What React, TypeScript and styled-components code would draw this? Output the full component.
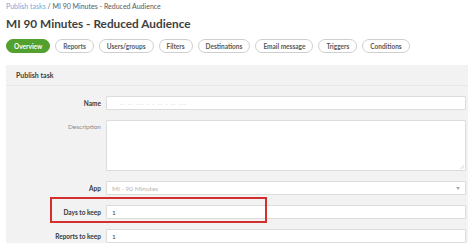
import React from "react";
import styled, { createGlobalStyle } from "styled-components";

const GlobalStyle = createGlobalStyle`
  html, body {
    margin: 0;
    padding: 0;
    background: #ffffff;
    font-family: Lato, "Open Sans", "Liberation Sans", sans-serif;
    color: #404040;
  }
`;

const tabs = [
  "Overview",
  "Reports",
  "Users/groups",
  "Filters",
  "Destinations",
  "Email message",
  "Triggers",
  "Conditions",
];

const Page = styled.div`
  width: 474px;
  height: 243px;
  overflow: hidden;
  padding: 0 6px;
  box-sizing: border-box;
`;

const Crumbs = styled.div`
  padding-top: 2px;
  height: 12px;
  font-size: 7px;
  line-height: 8px;
  color: #595959;
  span {
    color: #6fa8dc;
  }
`;

const Title = styled.h1`
  margin: 0;
  height: 25px;
  font-size: 11.8px;
  line-height: 20px;
  font-weight: 700;
  color: #404040;
`;

const TabRow = styled.div`
  display: flex;
  gap: 5px;
  height: 14px;
`;

const Tab = styled.div<{ active?: boolean }>`
  flex-shrink: 0;
  white-space: nowrap;
  display: flex;
  align-items: center;
  padding: 0 7px;
  height: 14px;
  box-sizing: border-box;
  border-radius: 8px;
  font-size: 6.5px;
  font-weight: 700;
  border: 1px solid ${(p) => (p.active ? "#52a02e" : "#cfcfcf")};
  background: ${(p) => (p.active ? "#52a02e" : "#ffffff")};
  color: ${(p) => (p.active ? "#ffffff" : "#595959")};
`;

const Panel = styled.div`
  margin-top: 12px;
  width: 462px;
  height: 200px;
  background: #f2f2f2;
`;

const PanelHeader = styled.div`
  height: 20px;
  padding-left: 10px;
  display: flex;
  align-items: center;
  font-size: 7px;
  font-weight: 700;
  color: #404040;
  border-bottom: 1px solid #e8e8e8;
`;

const Form = styled.div`
  padding: 10px 2px 0 0;
  display: flex;
  flex-direction: column;
  gap: 10px;
`;

const Row = styled.div<{ top?: boolean }>`
  position: relative;
  display: flex;
  align-items: ${(p) => (p.top ? "flex-start" : "center")};
  gap: 5px;
`;

const Label = styled.div<{ plain?: boolean }>`
  width: 95px;
  text-align: right;
  font-size: 6.5px;
  font-weight: ${(p) => (p.plain ? 400 : 700)};
  color: ${(p) => (p.plain ? "#8a8a8a" : "#383838")};
  padding-top: ${(p) => (p.plain ? "3px" : "0")};
`;

const Field = styled.div<{ tall?: boolean; muted?: boolean }>`
  position: relative;
  flex: 1;
  height: ${(p) => (p.tall ? "51px" : "14px")};
  box-sizing: border-box;
  background: #ffffff;
  border: 1px solid #dcdcdc;
  border-radius: 1px;
  padding: 0 5px;
  display: flex;
  align-items: center;
  font-size: 6.5px;
  color: ${(p) => (p.muted ? "#b5b5b5" : "#404040")};
`;

const Blur = styled.span`
  color: #d8d8d8;
  letter-spacing: 1px;
  margin-left: 8px;
`;

const Caret = styled.div`
  position: absolute;
  right: 5px;
  top: 5px;
  width: 0;
  height: 0;
  border-left: 2px solid transparent;
  border-right: 2px solid transparent;
  border-top: 3px solid #aaaaaa;
`;

const Grip = styled.svg`
  position: absolute;
  right: 1px;
  bottom: 1px;
`;

const Highlight = styled.div`
  position: absolute;
  left: 44px;
  top: -8px;
  width: 217px;
  height: 26px;
  box-sizing: border-box;
  border: 2px solid #d1302c;
  pointer-events: none;
`;

export default function App() {
  return (
    <Page>
      <GlobalStyle />
      <Crumbs>
        <span>Publish tasks</span> / MI 90 Minutes - Reduced Audience
      </Crumbs>
      <Title>MI 90 Minutes - Reduced Audience</Title>
      <TabRow>
        {tabs.map((t, i) => (
          <Tab key={t} active={i === 0}>
            {t}
          </Tab>
        ))}
      </TabRow>
      <Panel>
        <PanelHeader>Publish task</PanelHeader>
        <Form>
          <Row>
            <Label>Name</Label>
            <Field>
              <Blur>·· ·· ··· ·  · ·· ·  ·· ···</Blur>
            </Field>
          </Row>
          <Row top>
            <Label plain>Description</Label>
            <Field tall>
              <Grip width="5" height="5" viewBox="0 0 5 5">
                <path d="M1 5 L5 1 M3 5 L5 3" stroke="#c8c8c8" strokeWidth="0.6" />
              </Grip>
            </Field>
          </Row>
          <Row>
            <Label>App</Label>
            <Field muted>
              MI - 90 Minutes
              <Caret />
            </Field>
          </Row>
          <Row>
            <Label>Days to keep</Label>
            <Field>1</Field>
            <Highlight />
          </Row>
          <Row>
            <Label>Reports to keep</Label>
            <Field>1</Field>
          </Row>
        </Form>
      </Panel>
    </Page>
  );
}
